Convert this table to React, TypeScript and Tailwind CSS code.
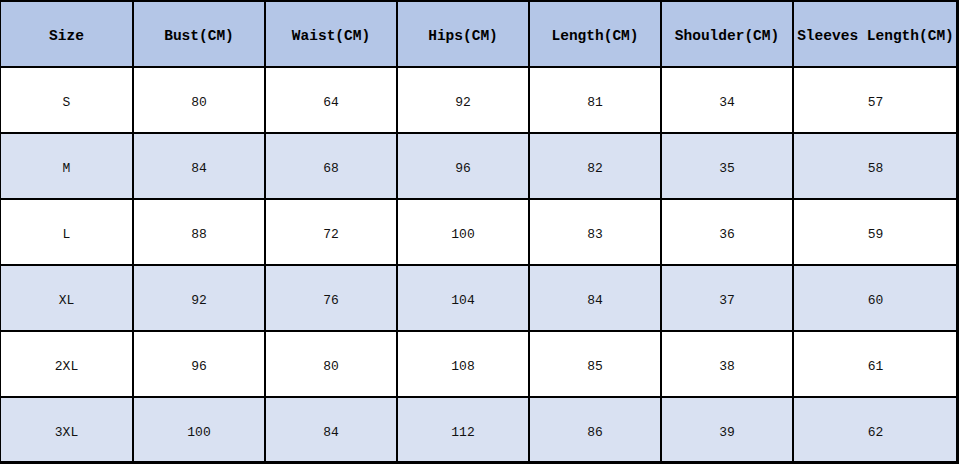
const headers = [
  "Size",
  "Bust(CM)",
  "Waist(CM)",
  "Hips(CM)",
  "Length(CM)",
  "Shoulder(CM)",
  "Sleeves Length(CM)",
];

const rows = [
  ["S", "80", "64", "92", "81", "34", "57"],
  ["M", "84", "68", "96", "82", "35", "58"],
  ["L", "88", "72", "100", "83", "36", "59"],
  ["XL", "92", "76", "104", "84", "37", "60"],
  ["2XL", "96", "80", "108", "85", "38", "61"],
  ["3XL", "100", "84", "112", "86", "39", "62"],
];

const cols = "grid grid-cols-[133px_132px_132px_132px_132px_132px_163px]";

export default function App() {
  return (
    <div className="w-[959px] h-[465px] bg-white font-['Liberation_Mono',monospace] text-black">
      <div className="w-[959px] border-t-2 border-r-[3px] border-b-[3px] border-l border-black">
        <div className={`${cols} h-[66px] bg-[#b4c6e7]`}>
          {headers.map((h, i) => (
            <div
              key={h}
              className={`flex items-center justify-center whitespace-nowrap border-b-2 border-black pt-[6px] text-[14.5px] font-bold ${
                i < headers.length - 1 ? "border-r-2" : ""
              }`}
            >
              {h}
            </div>
          ))}
        </div>
        {rows.map((row, r) => (
          <div
            key={row[0]}
            className={`${cols} ${r === rows.length - 1 ? "h-[63px]" : "h-[66px]"} ${
              r % 2 === 1 ? "bg-[#d9e1f2]" : "bg-white"
            }`}
          >
            {row.map((v, i) => (
              <div
                key={i}
                className={`flex items-center justify-center pt-[6px] text-[13px] text-[#111] ${
                  i < row.length - 1 ? "border-r-2" : ""
                } ${r < rows.length - 1 ? "border-b-2" : ""} border-black`}
              >
                {v}
              </div>
            ))}
          </div>
        ))}
      </div>
    </div>
  );
}
